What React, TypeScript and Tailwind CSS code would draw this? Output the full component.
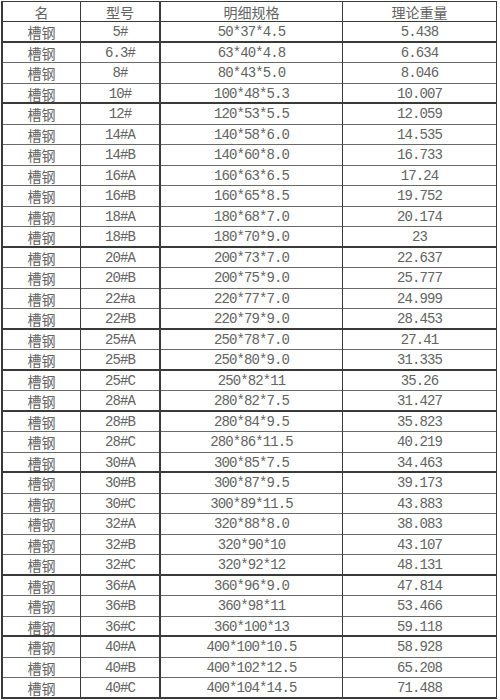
const ROWS: [string, string, string][] = [
  ["5#", "50*37*4.5", "5.438"],
  ["6.3#", "63*40*4.8", "6.634"],
  ["8#", "80*43*5.0", "8.046"],
  ["10#", "100*48*5.3", "10.007"],
  ["12#", "120*53*5.5", "12.059"],
  ["14#A", "140*58*6.0", "14.535"],
  ["14#B", "140*60*8.0", "16.733"],
  ["16#A", "160*63*6.5", "17.24"],
  ["16#B", "160*65*8.5", "19.752"],
  ["18#A", "180*68*7.0", "20.174"],
  ["18#B", "180*70*9.0", "23"],
  ["20#A", "200*73*7.0", "22.637"],
  ["20#B", "200*75*9.0", "25.777"],
  ["22#a", "220*77*7.0", "24.999"],
  ["22#B", "220*79*9.0", "28.453"],
  ["25#A", "250*78*7.0", "27.41"],
  ["25#B", "250*80*9.0", "31.335"],
  ["25#C", "250*82*11", "35.26"],
  ["28#A", "280*82*7.5", "31.427"],
  ["28#B", "280*84*9.5", "35.823"],
  ["28#C", "280*86*11.5", "40.219"],
  ["30#A", "300*85*7.5", "34.463"],
  ["30#B", "300*87*9.5", "39.173"],
  ["30#C", "300*89*11.5", "43.883"],
  ["32#A", "320*88*8.0", "38.083"],
  ["32#B", "320*90*10", "43.107"],
  ["32#C", "320*92*12", "48.131"],
  ["36#A", "360*96*9.0", "47.814"],
  ["36#B", "360*98*11", "53.466"],
  ["36#C", "360*100*13", "59.118"],
  ["40#A", "400*100*10.5", "58.928"],
  ["40#B", "400*102*12.5", "65.208"],
  ["40#C", "400*104*14.5", "71.488"],
];

// rows whose bottom rule prints heavier in the scan
const HEAVY = new Set([0, 3, 10, 14, 16, 18, 21, 26, 29, 32]);

const cjk = "font-['Noto_Sans_CJK_SC',sans-serif] text-[14px]";
const num = "font-['Liberation_Mono',monospace] text-[14px] tracking-[-0.9px]";

export default function App() {
  return (
    <div className="w-[500px] h-[700px] bg-white overflow-hidden">
      <div className="ml-[1px] mt-[1px] w-[496px] border-l-2 border-t border-[#3a3a3a] text-[#636363]">
        {/* header */}
        <div className="grid grid-cols-[78px_80px_182px_154px] h-[20px] border-b border-[#3a3a3a]">
          <div className={`flex items-center justify-center border-r border-[#3a3a3a] ${cjk}`}>名</div>
          <div className={`flex items-center justify-center border-r-2 border-[#3a3a3a] ${cjk}`}>型号</div>
          <div className={`flex items-center justify-center border-r border-[#3a3a3a] ${cjk}`}>明细规格</div>
          <div className={`flex items-center justify-center border-r border-[#3a3a3a] ${cjk}`}>理论重量</div>
        </div>

        {ROWS.map(([model, spec, weight], i) => (
          <div
            key={model}
            className={`grid grid-cols-[78px_80px_182px_154px] h-[20.5px] border-[#3a3a3a] ${
              HEAVY.has(i) ? "border-b-2" : "border-b border-b-[#6a6a6a]"
            }`}
          >
            <div className={`flex items-center justify-center border-r border-[#3a3a3a] ${cjk}`}>槽钢</div>
            <div className={`flex items-center justify-center border-r-2 border-[#3a3a3a] ${num}`}>{model}</div>
            <div className={`flex items-center justify-center border-r border-[#3a3a3a] ${num}`}>{spec}</div>
            <div className={`flex items-center justify-center border-r border-[#3a3a3a] ${num}`}>{weight}</div>
          </div>
        ))}
      </div>
    </div>
  );
}
